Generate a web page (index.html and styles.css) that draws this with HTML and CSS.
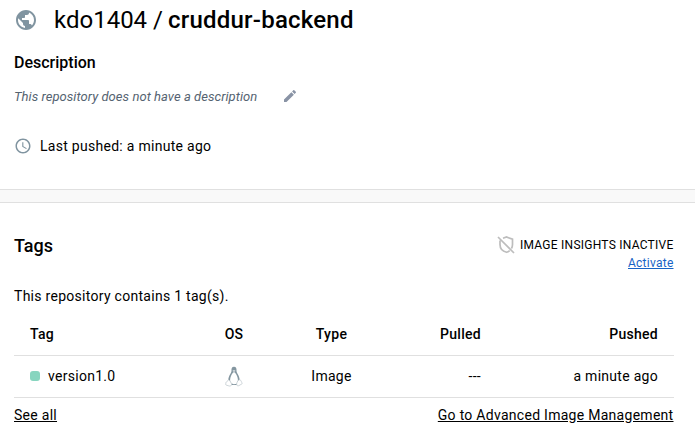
FILE: index.html
```html
<!DOCTYPE html>
<html lang="en">
<head>
<meta charset="utf-8">
<title>kdo1404/cruddur-backend</title>
<link rel="stylesheet" href="styles.css">
</head>
<body>
<section class="overview">
  <h1 class="title">
    <svg class="globe" viewBox="0 0 24 24"><path d="M12 2C6.480 2 2 6.480 2 12s4.480 10 10 10 10-4.480 10-10S17.520 2 12 2zm-1 17.930c-3.950-.490-7-3.850-7-7.930 0-.620.080-1.210.210-1.790L9 15v1c0 1.100.9 2 2 2v1.930zm6.900-2.540c-.260-.810-1-1.390-1.900-1.390h-1v-3c0-.550-.450-1-1-1H8v-2h2c.550 0 1-.450 1-1V7h2c1.100 0 2-.9 2-2v-.410c2.930 1.190 5 4.060 5 7.410 0 2.080-.8 3.970-2.100 5.390z"/></svg>
    <span class="owner">kdo1404</span><span class="slash">/</span><span class="repo">cruddur-backend</span>
  </h1>
  <h2 class="subtitle">Description</h2>
  <div class="description">
    <em class="empty">This repository does not have a description</em>
    <svg class="pencil" viewBox="0 0 24 24"><path d="M3 17.250V21h3.750L17.810 9.940l-3.750-3.750L3 17.250zM20.710 7.040c.390-.390.390-1.020 0-1.410l-2.340-2.340c-.390-.390-1.020-.390-1.410 0l-1.830 1.830 3.750 3.750 1.830-1.830z"/></svg>
  </div>
  <div class="pushed">
    <svg class="clock" viewBox="0 0 24 24"><path d="M11.990 2C6.470 2 2 6.480 2 12s4.470 10 9.990 10C17.520 22 22 17.520 22 12S17.520 2 11.990 2zM12 20c-4.420 0-8-3.580-8-8s3.580-8 8-8 8 3.580 8 8-3.580 8-8 8zm.5-13H11v6l5.250 3.150.750-1.230-4.500-2.670z"/></svg>
    <span>Last pushed: a minute ago</span>
  </div>
</section>
<div class="divider"></div>
<section class="tags">
  <div class="tags-head">
    <h2 class="tags-title">Tags</h2>
    <div class="insights">
      <div class="status">
        <svg class="shield" viewBox="0 0 18 18" fill="none" stroke="#bdbdbd" stroke-width="1.700"><path d="M6 2.300 9.500 1l6 2.200v5.300c0 1.500-.4 2.900-1.100 4M3 4.500v4c0 4 2.800 6.800 6.500 7.800 1.200-.3 2.300-.9 3.200-1.700M1 1l16 16"/></svg>
        <span>IMAGE INSIGHTS INACTIVE</span>
      </div>
      <a class="activate">Activate</a>
    </div>
  </div>
  <p class="count">This repository contains 1 tag(s).</p>
  <table class="table">
    <thead>
      <tr><th class="c-tag">Tag</th><th class="c-os">OS</th><th class="c-type">Type</th><th class="c-pulled">Pulled</th><th class="c-pushed">Pushed</th></tr>
    </thead>
    <tbody>
      <tr>
        <td class="c-tag"><span class="dot"></span>version1.0</td>
        <td class="c-os"><svg class="tux" viewBox="0 0 18 21"><path d="M9 .8C6.800.8 6.300 2.500 6.500 5 6.500 7 3.200 10 3.200 14.500L5.500 19h7l2.300-4.500C14.800 10 11.500 7 11.500 5 11.700 2.500 11.200.8 9 .8z" fill="#8496a0"/><path d="M9 6.200C7.700 6.200 7 8 6 10c-1 2-1.200 5-.3 7 .8 1.600 5.800 1.600 6.600 0 .9-2 .7-5-.3-7-1-2-1.700-3.800-3-3.800z" fill="#fff"/><path d="m7.400 4.700 1.600-.6 1.600.6L9 6z" fill="#dce1e4"/><path d="M3.600 13.800c1 .4 2.800 3 3 4.500 0 1.400-1.300 2-2.500 1.700L1 19c-.8-.6-.1-1.400-.1-2.400 0-1 1.300-.7 1.700-1.400.3-.6.3-1.500 1-1.400zM14.400 13.800c-1 .4-2.400 1.500-2.700 4-.1 1.800.9 2.600 2.300 1.800l3-1.800c.8-.6-.5-1.200-.6-2.100-.1-.8-1.100-2.100-2-1.900z" fill="#fff" stroke="#c3ccd1" stroke-width=".8"/></svg></td>
        <td class="c-type">Image</td>
        <td class="c-pulled">---</td>
        <td class="c-pushed">a minute ago</td>
      </tr>
    </tbody>
  </table>
  <div class="links"><a>See all</a><a>Go to Advanced Image Management</a></div>
</section>
</body>
</html>
```
FILE: styles.css
```css
* { box-sizing: border-box; }
body { margin: 0; background: #fff; color: #000; font: 14px/20px Roboto, sans-serif; letter-spacing: .28px; }
h1, h2, p { margin: 0; }
svg { display: block; flex: none; }
a { text-decoration: underline; }
.overview { height: 189px; padding: 4px 14px 0; }
.title { display: flex; align-items: center; height: 32px; font-size: 24px; line-height: 32px; font-weight: 400; letter-spacing: 0; }
.globe { width: 24px; height: 24px; margin-right: 16px; fill: #8094a0; }
.slash { margin: 0 5px 0 6px; }
.repo { font-weight: 500; letter-spacing: .22px; }
.subtitle { margin-top: 15px; font-size: 16px; line-height: 24px; font-weight: 500; letter-spacing: 0; }
.description { display: flex; align-items: center; height: 20px; margin-top: 12px; }
.empty { color: #556371; font-size: 13px; letter-spacing: .05px; }
.pencil { width: 16px; height: 16px; margin: -3px 0 0 25px; fill: #8993a5; }
.pushed { display: flex; align-items: center; gap: 8px; height: 20px; margin-top: 29px; }
.clock { width: 18px; height: 18px; fill: #8094a0; }
.divider { height: 14px; background: #f9f9f9; border: solid #e0e0e0; border-width: 1px 0; }
.tags { padding: 32px 21px 0 14px; }
.tags-head { display: flex; justify-content: space-between; height: 51px; }
.tags-title { font-size: 18px; line-height: 22px; font-weight: 500; letter-spacing: 0; }
.insights { display: flex; flex-direction: column; align-items: flex-end; font-size: 12px; line-height: 18px; letter-spacing: .25px; padding-right: .5px; }
.status { display: flex; align-items: center; gap: 5px; height: 19px; }
.shield { width: 18px; height: 18px; }
.activate { color: #1763c6; }
.count { height: 20px; }
.table { width: 660px; margin-top: 7px; border-collapse: collapse; table-layout: fixed; }
th, td { height: 42px; padding: 0 16px; border-bottom: 1px solid #e0e0e0; text-align: left; }
th { font-weight: 500; }
.c-tag { width: 180px; }
.c-os { width: 80px; text-align: center; }
.c-type { width: 115px; text-align: center; }
.c-pulled { width: 108px; text-align: right; }
.c-pushed { text-align: right; }
.dot { display: inline-block; width: 10px; height: 10px; margin-right: 8px; border-radius: 3px; background: #87d5bf; vertical-align: 0; }
.tux { width: 18px; height: 21px; margin: 0 auto; }
.links { display: flex; justify-content: space-between; margin-top: 7px; padding-right: .5px; }
```
